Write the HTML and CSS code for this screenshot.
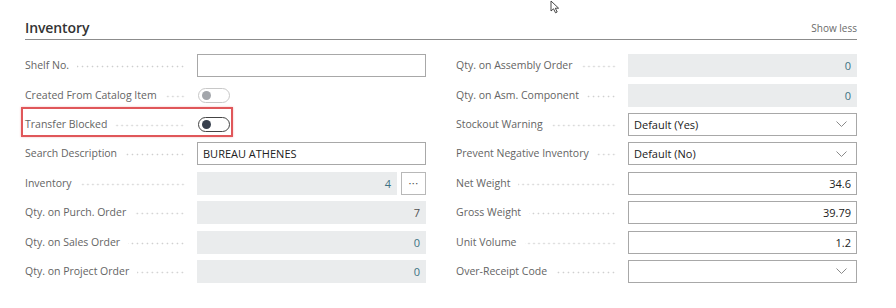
FILE: index.html
```html
<!DOCTYPE html>
<html lang="en">
<head>
    <meta charset="UTF-8">
    <title>Item Card - Inventory</title>
    <link rel="stylesheet" href="styles.css">
</head>
<body>
    <div class="fasttab">
        <div class="tab-header">
            <h2>Inventory</h2>
            <span class="show-less">Show less</span>
        </div>

        <div class="columns">
            <div class="column">
                <div class="field">
                    <div class="caption"><span>Shelf No.</span><i class="leader"></i></div>
                    <div class="control input"></div>
                </div>
                <div class="field">
                    <div class="caption"><span>Created From Catalog Item</span><i class="leader"></i></div>
                    <div class="control"><span class="toggle disabled"></span></div>
                </div>
                <div class="field highlighted">
                    <div class="caption"><span>Transfer Blocked</span><i class="leader"></i></div>
                    <div class="control"><span class="toggle"></span></div>
                </div>
                <div class="field">
                    <div class="caption"><span>Search Description</span><i class="leader"></i></div>
                    <div class="control input">BUREAU ATHENES</div>
                </div>
                <div class="field">
                    <div class="caption"><span>Inventory</span><i class="leader"></i></div>
                    <div class="control with-button">
                        <div class="readonly link">4</div>
                        <div class="dots-btn">&middot;&middot;&middot;</div>
                    </div>
                </div>
                <div class="field">
                    <div class="caption"><span>Qty. on Purch. Order</span><i class="leader"></i></div>
                    <div class="control readonly">7</div>
                </div>
                <div class="field">
                    <div class="caption"><span>Qty. on Sales Order</span><i class="leader"></i></div>
                    <div class="control readonly link">0</div>
                </div>
                <div class="field">
                    <div class="caption"><span>Qty. on Project Order</span><i class="leader"></i></div>
                    <div class="control readonly link">0</div>
                </div>
            </div>

            <div class="column">
                <div class="field">
                    <div class="caption"><span>Qty. on Assembly Order</span><i class="leader"></i></div>
                    <div class="control readonly link">0</div>
                </div>
                <div class="field">
                    <div class="caption"><span>Qty. on Asm. Component</span><i class="leader"></i></div>
                    <div class="control readonly link">0</div>
                </div>
                <div class="field">
                    <div class="caption"><span>Stockout Warning</span><i class="leader"></i></div>
                    <div class="control input select">Default (Yes)
                        <svg class="chevron" width="11" height="6" viewBox="0 0 11 6"><path d="M0.5 0.5 L5.5 5.5 L10.5 0.5" fill="none" stroke="#8a8a8a" stroke-width="1"/></svg>
                    </div>
                </div>
                <div class="field">
                    <div class="caption"><span>Prevent Negative Inventory</span><i class="leader"></i></div>
                    <div class="control input select">Default (No)
                        <svg class="chevron" width="11" height="6" viewBox="0 0 11 6"><path d="M0.5 0.5 L5.5 5.5 L10.5 0.5" fill="none" stroke="#8a8a8a" stroke-width="1"/></svg>
                    </div>
                </div>
                <div class="field">
                    <div class="caption"><span>Net Weight</span><i class="leader"></i></div>
                    <div class="control input number">34.6</div>
                </div>
                <div class="field">
                    <div class="caption"><span>Gross Weight</span><i class="leader"></i></div>
                    <div class="control input number">39.79</div>
                </div>
                <div class="field">
                    <div class="caption"><span>Unit Volume</span><i class="leader"></i></div>
                    <div class="control input number">1.2</div>
                </div>
                <div class="field">
                    <div class="caption"><span>Over-Receipt Code</span><i class="leader"></i></div>
                    <div class="control input select">
                        <svg class="chevron" width="11" height="6" viewBox="0 0 11 6"><path d="M0.5 0.5 L5.5 5.5 L10.5 0.5" fill="none" stroke="#8a8a8a" stroke-width="1"/></svg>
                    </div>
                </div>
            </div>
        </div>
    </div>

    <!-- mouse pointer in the screenshot -->
    <svg class="cursor" width="12" height="14" viewBox="0 0 12 14">
        <path d="M1 1 L1 11 L3.5 8.8 L5.5 12.8 L7.2 12 L5.3 8.2 L8.6 8.2 Z" fill="#fff" stroke="#333" stroke-width="0.9" stroke-linejoin="round"/>
    </svg>
</body>
</html>
```

FILE: styles.css
```css
body {
    margin: 0;
    background: #fff;
    font-family: "Open Sans", "Noto Sans", Arial, sans-serif;
    font-size: 10.5px;
    color: #646464;
}
.fasttab {
    width: 832px;
    margin-left: 25px;
    padding-top: 17px;
}
.tab-header {
    display: flex;
    justify-content: space-between;
    align-items: flex-end;
    height: 22px;
    border-bottom: 1px solid #8c8c8c;
}
.tab-header h2 {
    margin: 0 0 2px 0;
    font-size: 14px;
    font-weight: 600;
    color: #333;
    letter-spacing: -0.1px;
}
.show-less {
    font-size: 10px;
    color: #6a6a6a;
    margin-bottom: 4px;
}
.columns {
    display: grid;
    grid-template-columns: 401px 401px;
    column-gap: 30px;
    padding-top: 11px;
}
.field {
    display: flex;
    align-items: center;
    height: 29.4px;
    position: relative;
}
.caption {
    width: 172px;
    flex: none;
    display: flex;
    align-items: center;
    white-space: nowrap;
    padding-bottom: 1px;
}
.leader {
    flex: 1;
    height: 3px;
    margin: 3px 12px 0 8px;
    background-image: radial-gradient(circle, #cdcdcd 0.7px, transparent 1.1px);
    background-size: 5px 3px;
    background-repeat: repeat-x;
    background-position: right center;
}
.control {
    flex: 1;
    height: 23px;
    box-sizing: border-box;
    display: flex;
    align-items: center;
}
.input {
    border: 1px solid #a8a8a8;
    background: #fff;
    padding: 0 5px;
    color: #212121;
    font-size: 11px;
}
.number { justify-content: flex-end; }
.select { justify-content: space-between; }
.chevron { margin: 0 4px 0 auto; }
.readonly {
    background: #eaeced;
    justify-content: flex-end;
    padding: 0 6px;
    font-size: 11px;
    color: #505050;
}
.link { color: #3d7283; }
.with-button { gap: 4px; }
.with-button .readonly {
    flex: 1;
    height: 23px;
    display: flex;
    align-items: center;
}
.dots-btn {
    width: 25px;
    height: 23px;
    box-sizing: border-box;
    border: 1px solid #b8b8b8;
    display: flex;
    align-items: center;
    justify-content: center;
    color: #505050;
    font-size: 11px;
    letter-spacing: 0.5px;
    padding-bottom: 1px;
}
.toggle {
    width: 32px;
    height: 15px;
    box-sizing: border-box;
    border: 1px solid #444;
    border-radius: 8px;
    margin-left: 1px;
    position: relative;
}
.toggle::after {
    content: "";
    position: absolute;
    left: 3px;
    top: 2px;
    width: 9px;
    height: 9px;
    border-radius: 50%;
    background: #38404d;
}
.toggle.disabled { border-color: #c8c8c8; }
.toggle.disabled::after { background: #a3a6ab; }
.highlighted::before {
    content: "";
    position: absolute;
    left: -4px;
    top: -2.5px;
    width: 212px;
    height: 30px;
    box-sizing: border-box;
    border: 2px solid #e0575a;
    box-shadow: 0 0 2px rgba(224, 87, 90, 0.4);
}
.cursor {
    position: absolute;
    left: 550px;
    top: 0;
}
```
